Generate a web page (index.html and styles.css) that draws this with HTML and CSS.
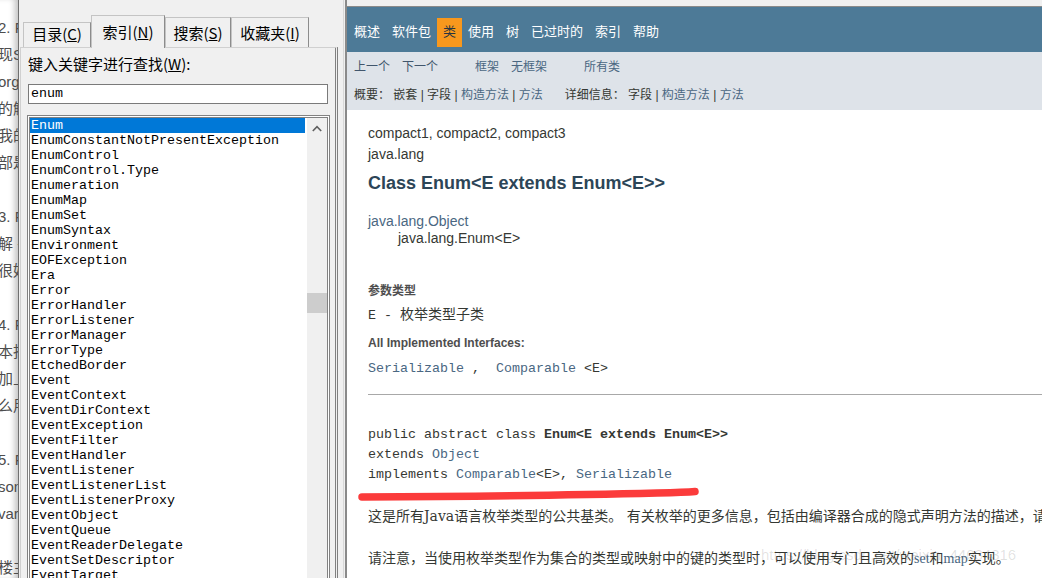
FILE: index.html
```html
<!DOCTYPE html>
<html lang="zh-CN">
<head>
    <meta charset="UTF-8">
    <title>Enum - 索引</title>
    <link rel="stylesheet" href="styles.css">
</head>
<body>

    <!-- blog page peeking out behind the help window -->
    <div class="blog-strip">
        <div class="blog-line">2. Fr</div>
        <div class="blog-line">现Sc</div>
        <div class="blog-line">org</div>
        <div class="blog-line">的解</div>
        <div class="blog-line">我的</div>
        <div class="blog-line">部是</div>
        <div class="blog-line"></div>
        <div class="blog-line">3. Fr</div>
        <div class="blog-line">解 -</div>
        <div class="blog-line">很好</div>
        <div class="blog-line"></div>
        <div class="blog-line">4. Fr</div>
        <div class="blog-line">本找</div>
        <div class="blog-line">加上</div>
        <div class="blog-line">么用</div>
        <div class="blog-line"></div>
        <div class="blog-line">5. Fr</div>
        <div class="blog-line">son</div>
        <div class="blog-line">var</div>
        <div class="blog-line"></div>
        <div class="blog-line">楼主</div>
    </div>

    <!-- help viewer: index tab -->
    <div class="help-window">
        <div class="tabs">
            <div class="tab tab-low tab-toc">目录(<u>C</u>)</div>
            <div class="tab tab-active tab-index">索引(<u>N</u>)</div>
            <div class="tab tab-search">搜索(<u>S</u>)</div>
            <div class="tab tab-fav">收藏夹(<u>I</u>)</div>
        </div>
        <div class="tab-panel">
            <div class="search-label">键入关键字进行查找(<u>W</u>):</div>
            <div class="search-input">enum</div>
            <div class="index-list">
                <div class="index-items">
                    <div class="index-item selected">Enum</div>
                    <div class="index-item">EnumConstantNotPresentException</div>
                    <div class="index-item">EnumControl</div>
                    <div class="index-item">EnumControl.Type</div>
                    <div class="index-item">Enumeration</div>
                    <div class="index-item">EnumMap</div>
                    <div class="index-item">EnumSet</div>
                    <div class="index-item">EnumSyntax</div>
                    <div class="index-item">Environment</div>
                    <div class="index-item">EOFException</div>
                    <div class="index-item">Era</div>
                    <div class="index-item">Error</div>
                    <div class="index-item">ErrorHandler</div>
                    <div class="index-item">ErrorListener</div>
                    <div class="index-item">ErrorManager</div>
                    <div class="index-item">ErrorType</div>
                    <div class="index-item">EtchedBorder</div>
                    <div class="index-item">Event</div>
                    <div class="index-item">EventContext</div>
                    <div class="index-item">EventDirContext</div>
                    <div class="index-item">EventException</div>
                    <div class="index-item">EventFilter</div>
                    <div class="index-item">EventHandler</div>
                    <div class="index-item">EventListener</div>
                    <div class="index-item">EventListenerList</div>
                    <div class="index-item">EventListenerProxy</div>
                    <div class="index-item">EventObject</div>
                    <div class="index-item">EventQueue</div>
                    <div class="index-item">EventReaderDelegate</div>
                    <div class="index-item">EventSetDescriptor</div>
                    <div class="index-item">EventTarget</div>
                </div>
                <div class="scrollbar">
                    <div class="scroll-up">
                        <svg width="10" height="7" viewBox="0 0 10 7">
                            <polyline points="0.8,6 5,1.6 9.2,6" fill="none" stroke="#606060" stroke-width="1.6"/>
                        </svg>
                    </div>
                    <div class="scroll-thumb"></div>
                </div>
            </div>
        </div>
    </div>

    <!-- javadoc page -->
    <div class="doc-pane">
        <div class="doc-frame">
            <div class="top-nav">
                <ul class="nav-list">
                    <li>概述</li>
                    <li>软件包</li>
                    <li class="nav-current">类</li>
                    <li>使用</li>
                    <li>树</li>
                    <li>已过时的</li>
                    <li>索引</li>
                    <li>帮助</li>
                </ul>
            </div>

            <div class="sub-nav">
                <div class="sub-row">
                    <ul class="sub-list">
                        <li class="dim">上一个</li>
                        <li class="dim">下一个</li>
                    </ul>
                    <ul class="sub-list sub-group">
                        <li><a>框架</a></li>
                        <li><a>无框架</a></li>
                    </ul>
                    <ul class="sub-list sub-group">
                        <li><a>所有类</a></li>
                    </ul>
                </div>
                <div class="sub-row sub-links">
                    <span class="summary">概要： 嵌套 | 字段 | <a>构造方法</a> | <a>方法</a></span>
                    <span class="detail">详细信息： 字段 | <a>构造方法</a> | <a>方法</a></span>
                </div>
            </div>

            <div class="content">
                <div class="sub-title">compact1, compact2, compact3</div>
                <div class="sub-title">java.lang</div>
                <h2 class="title">Class Enum&lt;E extends Enum&lt;E&gt;&gt;</h2>

                <ul class="inheritance">
                    <li><a>java.lang.Object</a></li>
                    <li class="inherit-child">java.lang.Enum&lt;E&gt;</li>
                </ul>

                <div class="dt dt-params">参数类型</div>
                <div class="dd"><code>E - </code>枚举类型子类</div>
                <div class="dt dt-ifaces">All Implemented Interfaces:</div>
                <div class="dd dd-code"><code><a>Serializable</a> ,&nbsp; <a>Comparable</a> &lt;E&gt;</code></div>

                <hr class="rule">

                <pre class="signature">public abstract class <b>Enum&lt;E extends Enum&lt;E&gt;&gt;</b>
extends <a>Object</a>
implements <a>Comparable</a>&lt;E&gt;, <a>Serializable</a></pre>

                <p class="block block-first">这是所有Java语言枚举类型的公共基类。 有关枚举的更多信息，包括由编译器合成的隐式声明方法的描述，请参见</p>
                <p class="block">请注意，当使用枚举类型作为集合的类型或映射中的键的类型时，可以使用专门且高效的<a class="serif-link">set</a>和<a class="serif-link">map</a>实现。</p>

                <!-- red marker stroke drawn over the page -->
                <svg class="marker" width="346" height="18" viewBox="0 0 346 18">
                    <path d="M5 12 C 90 11.5, 200 10.5, 300 8 C 320 7.5, 332 7, 338 6.5" fill="none" stroke="#fb3b3b" stroke-width="7.5" stroke-linecap="round"/>
                </svg>

                <div class="watermark">https://blog.csdn.net/weixin_44034316</div>
            </div>
        </div>
    </div>

</body>
</html>
```
FILE: styles.css
```css
/* Page */
body {
    margin: 0;
    width: 1042px;
    height: 578px;
    overflow: hidden;
    display: flex;
    background: #f0f0f0;
    font-family: "Noto Sans CJK SC", sans-serif;
}

ul {
    margin: 0;
    padding: 0;
    list-style: none;
}

/* Blog page behind */
.blog-strip {
    width: 18px;
    flex: none;
    overflow: hidden;
    padding-top: 14px;
    background: #fff;
    box-shadow: inset -6px 0 6px -3px rgba(0, 0, 0, 0.25);
    font-family: "Liberation Sans", "Noto Sans CJK SC", sans-serif;
    font-size: 15px;
    line-height: 27px;
    color: #4d4d4d;
    white-space: nowrap;
}

.blog-line {
    height: 27px;
    margin-left: -2px;
}

/* Help window */
.help-window {
    width: 326px;
    flex: none;
    box-sizing: border-box;
    border-left: 1px solid #707070;
    border-right: 1px solid #d8d8d8;
    padding-top: 15px;
}

.tabs {
    display: flex;
    align-items: flex-end;
    height: 33px;
    padding-left: 4px;
    margin-bottom: -1px;
    position: relative;
    z-index: 1;
}

.tab {
    box-sizing: border-box;
    height: 30px;
    margin-bottom: 1px;
    padding-top: 2px;
    border: 1px solid #c4c4c4;
    border-bottom: none;
    border-right-color: #8c8c8c;
    background: #f0f0f0;
    font-size: 15px;
    line-height: 26px;
    text-align: center;
    color: #000;
}

.tab-low {
    height: 25px;
    padding-top: 0;
    line-height: 22px;
}

.tab-active {
    height: 33px;
    margin-bottom: 0;
    padding-top: 0;
    line-height: 31px;
}

.tab-toc { width: 68px; }
.tab-index { width: 74px; }
.tab-search { width: 66px; }
.tab-fav { width: 78px; }

.tab-panel {
    width: 318px;
    height: 600px;
    margin-left: 1px;
    box-sizing: border-box;
    border: 1px solid #d0d0d0;
    border-right: 3px double #808080;
    padding: 6px 0 0 7px;
}

.search-label {
    font-size: 15px;
    line-height: 20px;
}

.search-input {
    width: 300px;
    height: 20px;
    margin-top: 10px;
    box-sizing: border-box;
    padding-left: 2px;
    border: 1px solid #7a7a7a;
    background: #fff;
    font-family: "Liberation Mono", monospace;
    font-size: 13.33px;
    line-height: 18px;
}

/* Index list */
.index-list {
    display: flex;
    width: 303px;
    height: 480px;
    margin: 11px 0 0 -1px;
    box-sizing: border-box;
    border: 3px double #828282;
    background: #fff;
}

.index-items {
    width: 277px;
    font-family: "Liberation Mono", monospace;
    font-size: 13.33px;
    line-height: 15px;
}

.index-item {
    height: 15px;
    margin-right: 2px;
    padding-left: 1px;
    white-space: nowrap;
}

.index-item.selected {
    background: #0078d7;
    color: #fff;
}

.scrollbar {
    width: 20px;
    background: #f0f0f0;
}

.scroll-up {
    height: 21px;
    display: flex;
    align-items: center;
    justify-content: center;
}

.scroll-thumb {
    height: 20px;
    margin-top: 154px;
    background: #cdcdcd;
}

/* Javadoc pane */
.doc-pane {
    flex: 1;
    min-width: 0;
    margin-left: 1px;
    border-left: 2px solid #8a8a8a;
    padding-top: 6px;
    overflow: hidden;
}

.doc-frame {
    height: 600px;
    border-top: 1px solid #8a8a8a;
    background: #fff;
}

.top-nav {
    padding: 11px 0 5px 1px;
    background: #4d7a97;
}

.nav-list {
    display: flex;
}

.nav-list li {
    padding: 3px 6px 7px;
    font-size: 13px;
    line-height: 19px;
    color: #fff;
}

.nav-list .nav-current {
    background: #f8981d;
    color: #253441;
}

.sub-nav {
    padding: 6px 0 6px 1px;
    background: #dee3e9;
    font-family: "Liberation Sans", "Noto Sans CJK SC", sans-serif;
    font-size: 12px;
    line-height: 18px;
    color: #353833;
}

.sub-nav a,
.content a {
    color: #4a6782;
}

.sub-row {
    display: flex;
}

.sub-list {
    display: flex;
}

.sub-list li {
    padding: 0 6px;
}

.sub-list .dim {
    color: #41566c;
}

.sub-group {
    margin-left: 25px;
}

.sub-links {
    margin-top: 10px;
    padding-left: 6px;
    white-space: pre;
}

.detail {
    margin-left: 22px;
}

/* Page body */
.content {
    position: relative;
    padding: 13px 0 0 21px;
    font-family: "Liberation Sans", "Noto Sans CJK SC", sans-serif;
    font-size: 14px;
    color: #353833;
}

.sub-title {
    line-height: 21px;
}

.title {
    margin: 7px 0 0;
    font-size: 18px;
    line-height: 22px;
    color: #2c4557;
}

.inheritance {
    margin-top: 19px;
    line-height: 17px;
}

.inherit-child {
    padding-left: 30px;
}

.dt {
    font-size: 12px;
    font-weight: bold;
    line-height: 16px;
    color: #4e4e4e;
}

.dt-params {
    margin-top: 36px;
}

.dt-ifaces {
    margin-top: 10px;
}

.dd {
    margin-top: 6px;
    line-height: 18px;
    white-space: nowrap;
}

.dd-code {
    margin-top: 7px;
}

code,
.signature {
    font-family: "Liberation Mono", monospace;
    font-size: 13.33px;
}

.rule {
    margin: 16px 0 0;
    border: none;
    border-top: 1px solid #a8a8a8;
}

.signature {
    margin: 30px 0 0;
    line-height: 20px;
    color: #353833;
}

.block {
    margin: 0;
    font-family: "DejaVu Serif", "Noto Sans CJK SC", serif;
    font-size: 14px;
    line-height: 20px;
    white-space: nowrap;
}

.block-first {
    margin-top: 21px;
}

.block + .block {
    margin-top: 22px;
}

.serif-link {
    font-family: "Liberation Serif", serif;
}

.marker {
    position: absolute;
    left: 10px;
    top: 375px;
}

.watermark {
    position: absolute;
    left: 414px;
    top: 436px;
    font-size: 15px;
    color: rgba(0, 0, 0, 0.12);
    white-space: nowrap;
}
```
